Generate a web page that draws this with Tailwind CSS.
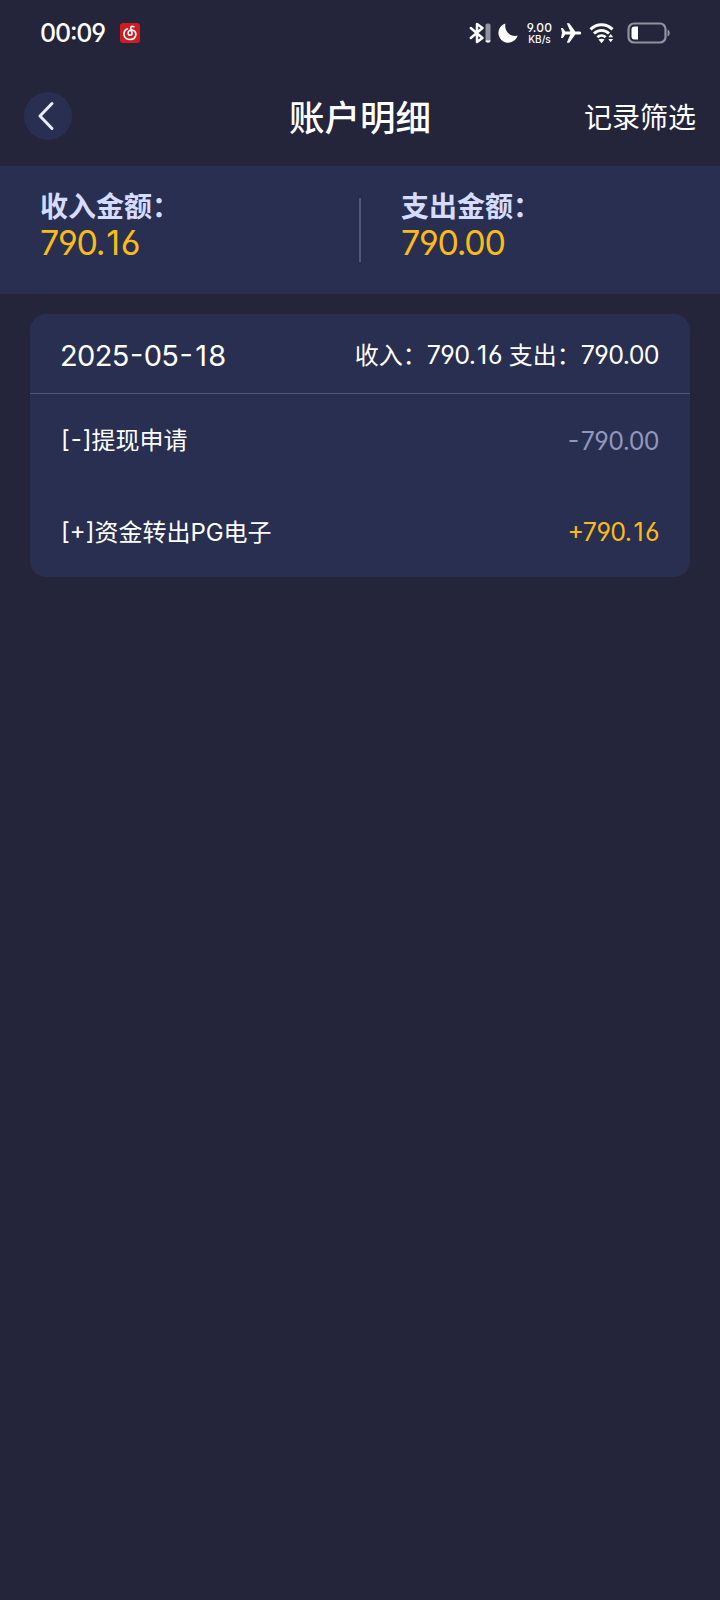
<!DOCTYPE html>
<html lang="zh-CN">
<head>
<meta charset="utf-8">
<meta name="viewport" content="width=720">
<title>账户明细</title>
<script src="https://cdn.jsdelivr.net/npm/@tailwindcss/browser@4"></script>
</head>
<body class="min-h-[1600px] w-[720px] bg-[#24243a] font-['Inter','Noto_Sans_CJK_SC',sans-serif] text-white [font-feature-settings:'cv03','cv04','case']">
  <!-- Status bar -->
  <div class="flex h-[66px] items-center pl-10 pr-[49px]">
    <span class="w-[68px] text-[25px] leading-none font-medium tracking-[-1.200px] whitespace-nowrap">00:09</span>
    <svg class="ml-3 size-5" viewBox="0 0 20 20" fill="none">
      <rect width="20" height="20" rx="3" fill="#d01c20"/>
      <path d="M13.800 3.700c-1.600-.8-3.300-.2-3 1.500l1.200 4.900c.5 2.700-3.900 2.900-3.900.2 0-2.400 2.200-3.500 4.100-3.300 5.400.6 4.800 9.500-1.900 9.500-7.400 0-8.200-8.300-2.900-10.700" stroke="#fff" stroke-width="1.700" stroke-linecap="round"/>
    </svg>
    <div class="ml-auto flex items-center">
      <svg class="h-[22px] w-[22px]" viewBox="0 0 22 22" fill="none">
        <path d="M1.800 6l11.700 10L8 20V2L13.500 6 1.800 16" stroke="#fff" stroke-width="2.500" stroke-linejoin="round" stroke-linecap="round"/>
        <rect x="16.500" y="1.500" width="5" height="19" rx="1.800" fill="#92929e"/>
        <path d="M16.500 18.500h5a2 2 0 0 1-2 2h-1a2 2 0 0 1-2-2z" fill="#fff"/>
      </svg>
      <svg class="ml-1.5 size-[22px]" viewBox="0 0 22 22"><path d="M8.500 1.500A9.800 9.800 0 1 0 20.700 13.500C14 15.500 6.500 9.500 8.500 1.500z" fill="#fff"/></svg>
      <div class="ml-[7px] flex w-[27px] flex-col items-center font-medium whitespace-nowrap">
        <span class="text-[12px] leading-[12px] tracking-[0.200px]">9.00</span>
        <span class="text-[10px] leading-[10px]">KB/s</span>
      </div>
      <svg class="ml-[7px] size-[22px]" viewBox="0 0 22 22"><path d="M1 6h1.800l2.500 3.400h5L6.800 1.200h2.500l6 8.200h4.200c2.200 0 2.200 3.200 0 3.200h-4.200l-6 8.200H6.800l3.500-8.200h-5L2.800 16H1l1-5z" fill="#fff"/></svg>
      <svg class="ml-[7px] h-[22px] w-[26px]" viewBox="0 0 26 22" fill="none">
        <path d="M1.500 7.400c6.200-6.200 15.800-6.200 22 0M5 11.500c4.200-4.200 10.800-4.200 15 0M8.400 15.300c2.400-2.300 5.800-2.300 8.200 0" stroke="#fff" stroke-width="2.900"/>
        <path d="M9.500 17.600c1.700-1.300 4.300-1.300 6 0l-3 3.600z" fill="#fff"/>
        <path d="M19.300 15.300l2.400-3.300 2.400 3.300zM19.300 17l2.400 3.300 2.400-3.300z" fill="#fff"/>
      </svg>
      <svg class="ml-[12px] h-[22px] w-[44px]" viewBox="0 0 44 22" fill="none">
        <rect x="1.500" y="1.500" width="37" height="19" rx="5.500" stroke="#92929e" stroke-width="2.200"/>
        <path d="M40.500 7.500c3 1 3 6 0 7z" fill="#92929e"/>
        <path d="M7.500 4.500h3.500v13H7.500a3 3 0 0 1-3-3v-7a3 3 0 0 1 3-3z" fill="#fff"/>
      </svg>
    </div>
  </div>

  <!-- Title bar -->
  <header class="grid h-[100px] grid-cols-[1fr_auto_1fr] items-center px-6">
    <button class="flex size-12 items-center justify-center rounded-full bg-[#292f50]" aria-label="返回">
      <svg class="size-8" viewBox="0 0 32 32" fill="none"><path d="M20 3.500L8 16L20 28.500" stroke="#e9ebfb" stroke-width="3" stroke-linecap="round" stroke-linejoin="round"/></svg>
    </button>
    <h1 class="pt-1.5 text-[35.500px] leading-none font-medium">账户明细</h1>
    <span class="pt-1 text-right text-[28px] leading-none">记录筛选</span>
  </header>

  <!-- Totals -->
  <section class="flex h-32 items-start bg-[#292f50] pt-6">
    <div class="flex w-[359px] flex-col pl-10">
      <span class="text-[28px] leading-[34px] font-bold text-[#d6dcff]">收入金额：</span>
      <span class="text-[34px] leading-[38px] tracking-[-1.300px] text-[#fabb1a]">790.<span class="mx-[2px]">1</span>6</span>
    </div>
    <div class="mt-2 h-16 w-0.5 bg-[#50567a]"></div>
    <div class="flex flex-col pl-10">
      <span class="text-[28px] leading-[34px] font-bold text-[#d6dcff]">支出金额：</span>
      <span class="text-[34px] leading-[38px] tracking-[-1.300px] text-[#fabb1a]">790.00</span>
    </div>
  </section>

  <!-- Daily records -->
  <section class="mx-[30px] mt-5 h-[263px] rounded-2xl bg-[#292f50]">
    <div class="flex h-20 items-center justify-between border-b border-[#50567a] pr-[31px] pl-[30px] pt-1">
      <span class="text-[29px] leading-none tracking-[-0.600px]">2025<span class="mx-px">-</span>05<span class="mx-px">-</span><span class="mx-0.5">1</span>8</span>
      <span class="text-[24px] leading-none whitespace-nowrap">收入：<span class="text-[25px] tracking-[-0.600px]">790.<span class="mx-[1.500px]">1</span>6</span> 支出：<span class="text-[25px] tracking-[-0.600px]">790.00</span></span>
    </div>
    <div class="flex h-[92px] items-center justify-between pr-[31px] pl-[31px] pt-0.5">
      <span class="text-[24px] leading-none">[<span class="mx-px">-</span>]提现申请</span>
      <span class="text-[25px] leading-none tracking-[-0.600px] text-[#8f97bd]"><span class="mr-0.5">-</span>790.00</span>
    </div>
    <div class="flex h-[91px] items-center justify-between pr-[31px] pl-[31px] pt-0.5">
      <span class="text-[24px] leading-none">[+]资金转出PG电子</span>
      <span class="text-[25px] leading-none tracking-[-0.600px] text-[#fabb1a]">+790.<span class="mx-0.5">1</span>6</span>
    </div>
  </section>
</body>
</html>
